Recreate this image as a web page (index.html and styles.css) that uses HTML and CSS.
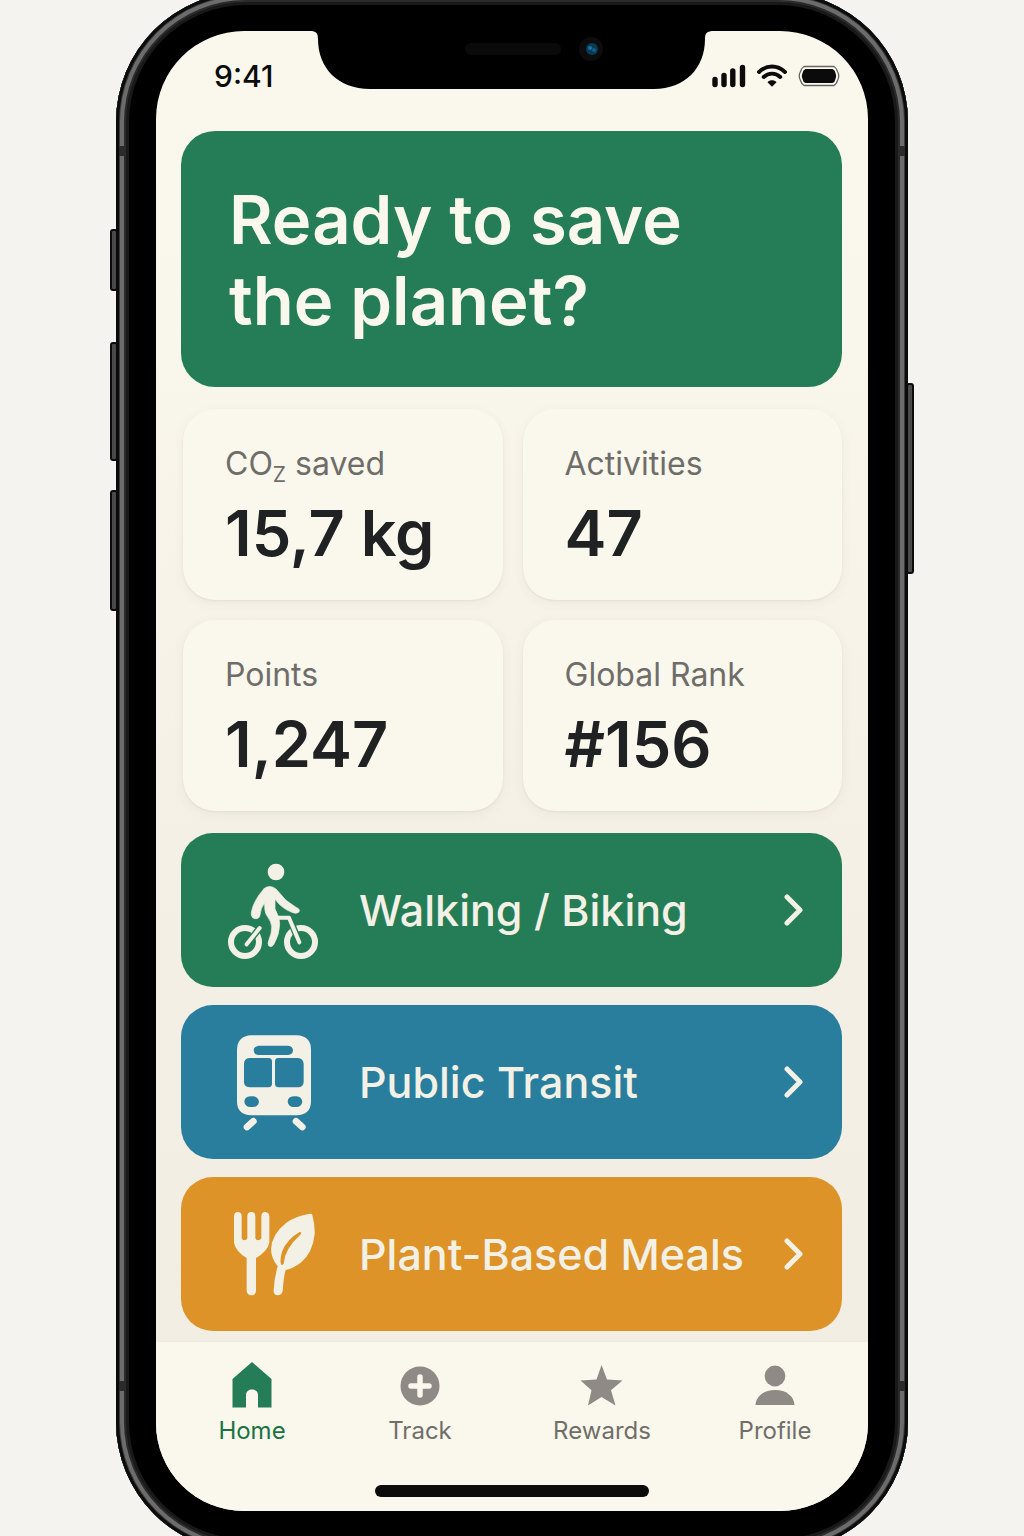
FILE: index.html
```html
<!DOCTYPE html>
<html lang="en">
<head>
<meta charset="utf-8">
<meta name="viewport" content="width=device-width, initial-scale=1">
<title>Home</title>
<link rel="stylesheet" href="styles.css">
</head>
<body>
<div class="stage">
  <div class="phone">
    <span class="side-key side-key-mute"></span>
    <span class="side-key side-key-up"></span>
    <span class="side-key side-key-down"></span>
    <span class="side-key side-key-power"></span>
    <span class="seam seam-top-left"></span>
    <span class="seam seam-top-right"></span>
    <span class="seam seam-bottom-left"></span>
    <span class="seam seam-bottom-right"></span>
    <div class="screen">
      <svg class="notch" viewBox="0 0 404 60" aria-hidden="true">
        <path d="M0 0H404V1C397 1 395 3 395 9C395 38 375 59 344 59H60C28 59 8 38 8 9C8 3 6 1 0 1Z" fill="#000"/>
        <rect x="155" y="13" width="96" height="12" rx="6" fill="#0a0a0a"/>
        <circle cx="281" cy="19" r="12" fill="#0c0c0e"/>
        <circle cx="282" cy="19" r="6" fill="#0b3a55"/>
        <circle cx="280" cy="18" r="2" fill="#1477a5"/>
        <circle cx="284" cy="20" r="2" fill="#0f5f88"/>
      </svg>
      <header class="status">
        <time class="clock">9:41</time>
        <div class="status-icons">
          <svg width="34" height="24" viewBox="0 0 34 24" aria-hidden="true">
            <path d="M3 15.5V20.500M12 11.500V20.500M20.800 7V20.500M30.500 3.500V20.500" stroke="#0b0b0b" stroke-width="5.400" stroke-linecap="round"/>
          </svg>
          <svg width="30" height="24" viewBox="0 0 30 24" fill="none" aria-hidden="true">
            <path d="M2 8C9.500 .7 20.500 .7 28 8M6.700 13C11.500 8.500 18.500 8.500 23.300 13" stroke="#0b0b0b" stroke-width="3.900" stroke-linecap="round"/>
            <path d="M10.500 18.200C13 15.700 17 15.700 19.500 18.200L15 22.800Z" fill="#0b0b0b"/>
          </svg>
          <svg width="42" height="22" viewBox="0 0 42 22" aria-hidden="true">
            <path d="M6 1.500H36Q38.500 3 39.500 6.500Q42 11 39.500 15.500Q38.500 19 36 20.500H6Q3.500 19 2.500 15.500Q0 11 2.500 6.500Q3.500 3 6 1.500Z" fill="#fdfbf3" stroke="#66645f" stroke-width="1.300"/>
            <path d="M7.500 4H34.500Q37 5 37.500 8Q39 11 37.500 14Q37 17 34.500 18H7.500Q5 17 4.500 14Q3 11 4.500 8Q5 5 7.500 4Z" fill="#0b0b0b"/>
          </svg>
        </div>
      </header>
      <main class="content">
        <section class="hero">
          <h1>Ready to save<br>the planet?</h1>
        </section>
        <dl class="stats">
          <div class="stat"><dt>CO<sub>Z</sub> saved</dt><dd>15,7 kg</dd></div>
          <div class="stat"><dt>Activities</dt><dd>47</dd></div>
          <div class="stat"><dt>Points</dt><dd>1,247</dd></div>
          <div class="stat"><dt>Global Rank</dt><dd>#156</dd></div>
        </dl>
        <div class="actions">
          <button type="button" class="action action-green">
            <svg class="action-icon" viewBox="75 60 288 300" fill="none" stroke="#f3f1e6" stroke-linecap="round" stroke-linejoin="round" aria-hidden="true">
              <circle cx="228" cy="96" r="25" fill="#f3f1e6" stroke="none"/>
              <circle cx="135" cy="306" r="42" stroke-width="18"/>
              <circle cx="303" cy="306" r="42" stroke-width="18"/>
              <path d="M140 313L179 264" stroke="#257d57" stroke-width="20"/>
              <path d="M140 313L179 264" stroke-width="12"/>
              <path d="M268 235L298 306" stroke="#257d57" stroke-width="20"/>
              <path d="M232 233H267L298 307" stroke-width="12"/>
              <path d="M192 146Q209 132 228 147L258 181L288 202Q303 208 296 217Q288 223 276 217Q246 206 225 178V207Q239 232 239 252Q239 283 221 314Q214 324 206 317Q202 312 207 299Q216 278 215 260Q214 245 202 229Q193 218 194 189Q182 204 180 225Q178 237 166 236Q152 234 154 217Q160 182 192 146Z" fill="#f3f1e6" stroke-width="2"/>
            </svg>
            <span class="action-label">Walking / Biking</span>
            <svg class="chevron" viewBox="0 0 20 34" aria-hidden="true"><path d="M3 4L16 17L3 30"/></svg>
          </button>
          <button type="button" class="action action-blue">
            <svg class="action-icon" viewBox="75 66 288 300" aria-hidden="true">
              <path fill="#f3f1e6" fill-rule="evenodd" d="M154 76H290Q333 78 333 119V276Q331 315 290 316H154Q112 314 111 276V119Q112 78 154 76ZM176 107Q161 109 161 121Q161 134 176 135H264Q279 134 279 121Q279 109 264 107ZM148 144Q132 145 132 162V216Q132 231 148 232H206Q216 231 216 221V154Q216 145 206 144ZM234 144Q225 145 225 154V221Q225 231 235 232H297Q310 230 311 216V162Q310 146 294 144ZM151 259Q134 260 133 275Q135 290 151 291H159Q175 290 177 275Q175 260 159 259ZM281 259Q264 260 263 275Q265 290 281 291H289Q305 290 307 275Q305 260 289 259Z"/>
              <path d="M141 351L160 334M288 334L307 351" stroke="#f3f1e6" stroke-width="20" stroke-linecap="round"/>
            </svg>
            <span class="action-label">Public Transit</span>
            <svg class="chevron" viewBox="0 0 20 34" aria-hidden="true"><path d="M3 4L16 17L3 30"/></svg>
          </button>
          <button type="button" class="action action-orange">
            <svg class="action-icon" viewBox="75 42 288 300" aria-hidden="true">
              <path fill="#f3f1e6" d="M102 79Q102 66 114 66Q125 67 125 79V145Q127 151 133 151Q140 151 142 145V79Q142 66 154 66Q166 66 166 79V145Q168 151 174 151Q181 151 184 145V79Q184 66 196 66Q207 67 208 79V158Q202 184 168 204V302Q167 316 154 316Q141 315 140 302V204Q107 184 102 158Z"/>
              <path fill="#f3f1e6" fill-rule="evenodd" d="M332 71Q336 71 337 75Q345 105 344 132Q338 190 302 218Q280 235 257 240Q251 260 248 303Q246 315 233 316Q220 314 221 301Q223 263 233 229Q213 203 213 176Q216 132 259 98Q289 77 332 71ZM299 126Q261 147 246 185Q240 206 242 218Q244 230 251 221Q254 176 301 134Q308 126 299 126Z"/>
            </svg>
            <span class="action-label">Plant-Based Meals</span>
            <svg class="chevron" viewBox="0 0 20 34" aria-hidden="true"><path d="M3 4L16 17L3 30"/></svg>
          </button>
        </div>
      </main>
      <footer class="dock">
        <nav class="tabs">
          <a class="tab tab-current" href="#home" aria-current="page">
            <svg viewBox="0 0 48 48" aria-hidden="true"><path d="M24 1L43.500 18V46.500H30V34C30 26.500 18 26.500 18 34V46.500H4.500V18Z"/></svg>
            <span>Home</span>
          </a>
          <a class="tab" href="#track">
            <svg viewBox="0 0 48 48" aria-hidden="true"><circle cx="24" cy="25" r="19.500"/><path d="M24 16V34M15 25H33" stroke="#faf7ec" stroke-width="5.500" stroke-linecap="round"/></svg>
            <span>Track</span>
          </a>
          <a class="tab" href="#rewards">
            <svg viewBox="0 0 48 48" aria-hidden="true"><path d="M23.500 4L29 18.500L44.500 19.500L33 29.300L37.500 44.500L23.500 36L10 44.500L13.500 29.300L2.500 19.500L18.500 18.500Z"/></svg>
            <span>Rewards</span>
          </a>
          <a class="tab" href="#profile">
            <svg viewBox="0 0 48 48" aria-hidden="true"><circle cx="24" cy="15" r="10.400"/><path d="M4.500 44C5 35 13 29 24 29S43 35 43.500 44Z"/></svg>
            <span>Profile</span>
          </a>
        </nav>
        <div class="home-bar"></div>
      </footer>
    </div>
  </div>
</div>
</body>
</html>
```
FILE: styles.css
```css
* {
  box-sizing: border-box;
}

body {
  margin: 0;
  background: #f4f3ef;
  color: #202123;
  font-family: Inter, "Liberation Sans", sans-serif;
}

.stage {
  overflow: hidden;
}

.phone {
  position: relative;
  margin: -8px 116px -16px;
  padding: 39px 40px 41px;
  border-radius: 130px;
  background: #000;
  box-shadow:
    inset 0 0 0 3px #0b0b0b,
    inset 0 0 0 4px #3a3a3a,
    inset 0 0 0 8px #6c6c6c,
    inset 0 0 0 10px #2b2b2b,
    inset 0 0 0 13px #191919;
}

/* hardware keys and antenna seams on the frame */
.side-key {
  position: absolute;
  width: 8px;
  left: -6px;
  border: 2px solid #0b0b0b;
  border-radius: 3px;
  background: #4a4a4a;
}

.side-key-mute { top: 237px; height: 62px; }
.side-key-up { top: 350px; height: 119px; }
.side-key-down { top: 498px; height: 121px; }
.side-key-power { top: 391px; height: 191px; left: auto; right: -6px; }

.seam {
  position: absolute;
  width: 6px;
  height: 10px;
  background: #2b2b2b;
}

.seam-top-left { top: 154px; left: 3px; }
.seam-top-right { top: 154px; right: 3px; }
.seam-bottom-left { bottom: 161px; left: 3px; }
.seam-bottom-right { bottom: 161px; right: 3px; }

.screen {
  position: relative;
  display: flex;
  flex-direction: column;
  overflow: hidden;
  border-radius: 88px;
  background: linear-gradient(#faf7ed 0, #f9f6ec 300px, #f3efe5 900px, #f1ede2 100%);
}

.notch {
  position: absolute;
  top: -1px;
  left: 50%;
  width: 404px;
  height: 60px;
  margin-left: -202px;
}

.status {
  display: flex;
  align-items: center;
  justify-content: space-between;
  height: 100px;
  padding: 0 28px 10px 58px;
}

.clock {
  color: #0b0b0b;
  font-size: 30px;
  font-weight: 500;
}

.status-icons {
  display: flex;
  align-items: center;
  gap: 11px;
}

.content {
  padding: 0 26px 10px 25px;
}

.hero {
  padding: 48px 48px 46px;
  border-radius: 34px;
  background: #257d57;
}

.hero h1 {
  margin: 0;
  color: #faf8ec;
  font-size: 67px;
  font-weight: 600;
  line-height: 81px;
}

.stats {
  display: grid;
  grid-template-columns: 1fr 1fr;
  gap: 20px;
  margin: 22px 0 22px 2px;
}

.stat {
  padding: 31px 40px 26px 42px;
  border-radius: 32px;
  background: #faf7ec;
  box-shadow: 0 1px 2px rgba(90, 80, 50, 0.08), 0 3px 12px rgba(90, 80, 50, 0.06);
}

.stat dt {
  color: #6f6d69;
  font-size: 32px;
  line-height: 48px;
  white-space: nowrap;
}

.stat sub {
  font-size: 21px;
  line-height: 0;
}

.stat dd {
  margin: 5px 0 0;
  font-size: 63px;
  font-weight: 600;
  line-height: 81px;
  white-space: nowrap;
}

.actions {
  display: grid;
  gap: 18px;
}

.action {
  display: flex;
  align-items: center;
  width: 100%;
  padding: 27px 38px 27px 44px;
  border: 0;
  border-radius: 32px;
  color: #f3f1e6;
  font: 500 43px/56px Inter, "Liberation Sans", sans-serif;
  text-align: left;
  white-space: nowrap;
}

.action-green { background: #257d57; }
.action-blue { background: #2a7e9d; }
.action-orange { background: #de9329; }

.action-icon {
  flex: none;
  width: 96px;
  height: 100px;
}

.action-label {
  flex: 1;
  margin-left: 38px;
}

.chevron {
  flex: none;
  width: 20px;
  height: 34px;
  fill: none;
  stroke: #f3f1e6;
  stroke-width: 5;
  stroke-linecap: round;
  stroke-linejoin: round;
}

.dock {
  padding: 19px 0 14px;
  border-top: 1px solid #ece9df;
  background: #faf7ec;
}

.tabs {
  display: grid;
  grid-template-columns: 168fr 168fr 196fr 150fr;
  padding: 0 18px 0 12px;
}

.tab {
  display: flex;
  flex-direction: column;
  align-items: center;
  color: #716e69;
  font-size: 24px;
  line-height: 44px;
  text-decoration: none;
}

.tab svg {
  width: 48px;
  height: 48px;
  fill: #8f8a85;
}

.tab-current {
  color: #1c7344;
}

.tab-current svg {
  fill: #257d57;
}

.home-bar {
  width: 274px;
  height: 12px;
  margin: 32px auto 0;
  border-radius: 6px;
  background: #0b0b0b;
}
```
